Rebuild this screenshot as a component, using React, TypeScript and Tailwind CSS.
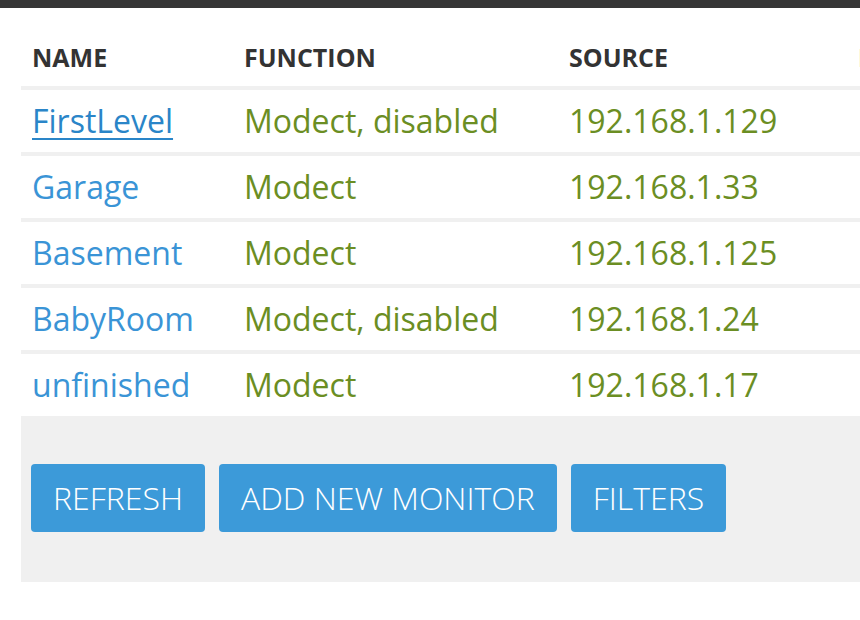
import React from "react";

const rows = [
  { name: "FirstLevel", fn: "Modect, disabled", src: "192.168.1.129", underline: true },
  { name: "Garage", fn: "Modect", src: "192.168.1.33" },
  { name: "Basement", fn: "Modect", src: "192.168.1.125" },
  { name: "BabyRoom", fn: "Modect, disabled", src: "192.168.1.24" },
  { name: "unfinished", fn: "Modect", src: "192.168.1.17" },
];

export default function App() {
  return (
    <div className="w-[860px] h-[620px] bg-white overflow-hidden" style={{ fontFamily: '"Open Sans", sans-serif' }}>
      <div className="h-[8px] bg-[#363636]" />
      <div className="ml-[21px] w-[1000px]">
        <div className="flex h-[78px] items-center text-[25px] font-bold text-[#333] pt-[22px]">
          <div className="w-[223px] shrink-0 pl-[11px]">NAME</div>
          <div className="w-[325px] shrink-0">FUNCTION</div>
          <div className="w-[288px] shrink-0">SOURCE</div>
          <div className="shrink-0 pl-[1px] text-[#8b4513]">EVENTS</div>
        </div>
        {rows.map((r) => (
          <div key={r.name} className="flex h-[66px] items-center border-t-4 border-[#f0f0f0] text-[32px]">
            <div className={"w-[223px] shrink-0 pl-[11px] " + (r.underline ? "underline decoration-2 underline-offset-[5px] text-[#2a85c8]" : "text-[#3a94d6]")}>{r.name}</div>
            <div className="w-[325px] shrink-0 text-[#6b8e23]">{r.fn}</div>
            <div className="w-[288px] shrink-0 text-[#6b8e23]">{r.src}</div>
          </div>
        ))}
        <div className="h-[166px] w-[839px] bg-[#f0f0f0] flex items-start gap-[14px] pl-[10px] pt-[48px]">
          <button className="h-[68px] px-[22px] bg-[#3c9ad9] rounded-[4px] text-white text-[32px] font-light">REFRESH</button>
          <button className="h-[68px] px-[22px] bg-[#3c9ad9] rounded-[4px] text-white text-[32px] font-light">ADD NEW MONITOR</button>
          <button className="h-[68px] px-[22px] bg-[#3c9ad9] rounded-[4px] text-white text-[32px] font-light">FILTERS</button>
        </div>
      </div>
    </div>
  );
}
